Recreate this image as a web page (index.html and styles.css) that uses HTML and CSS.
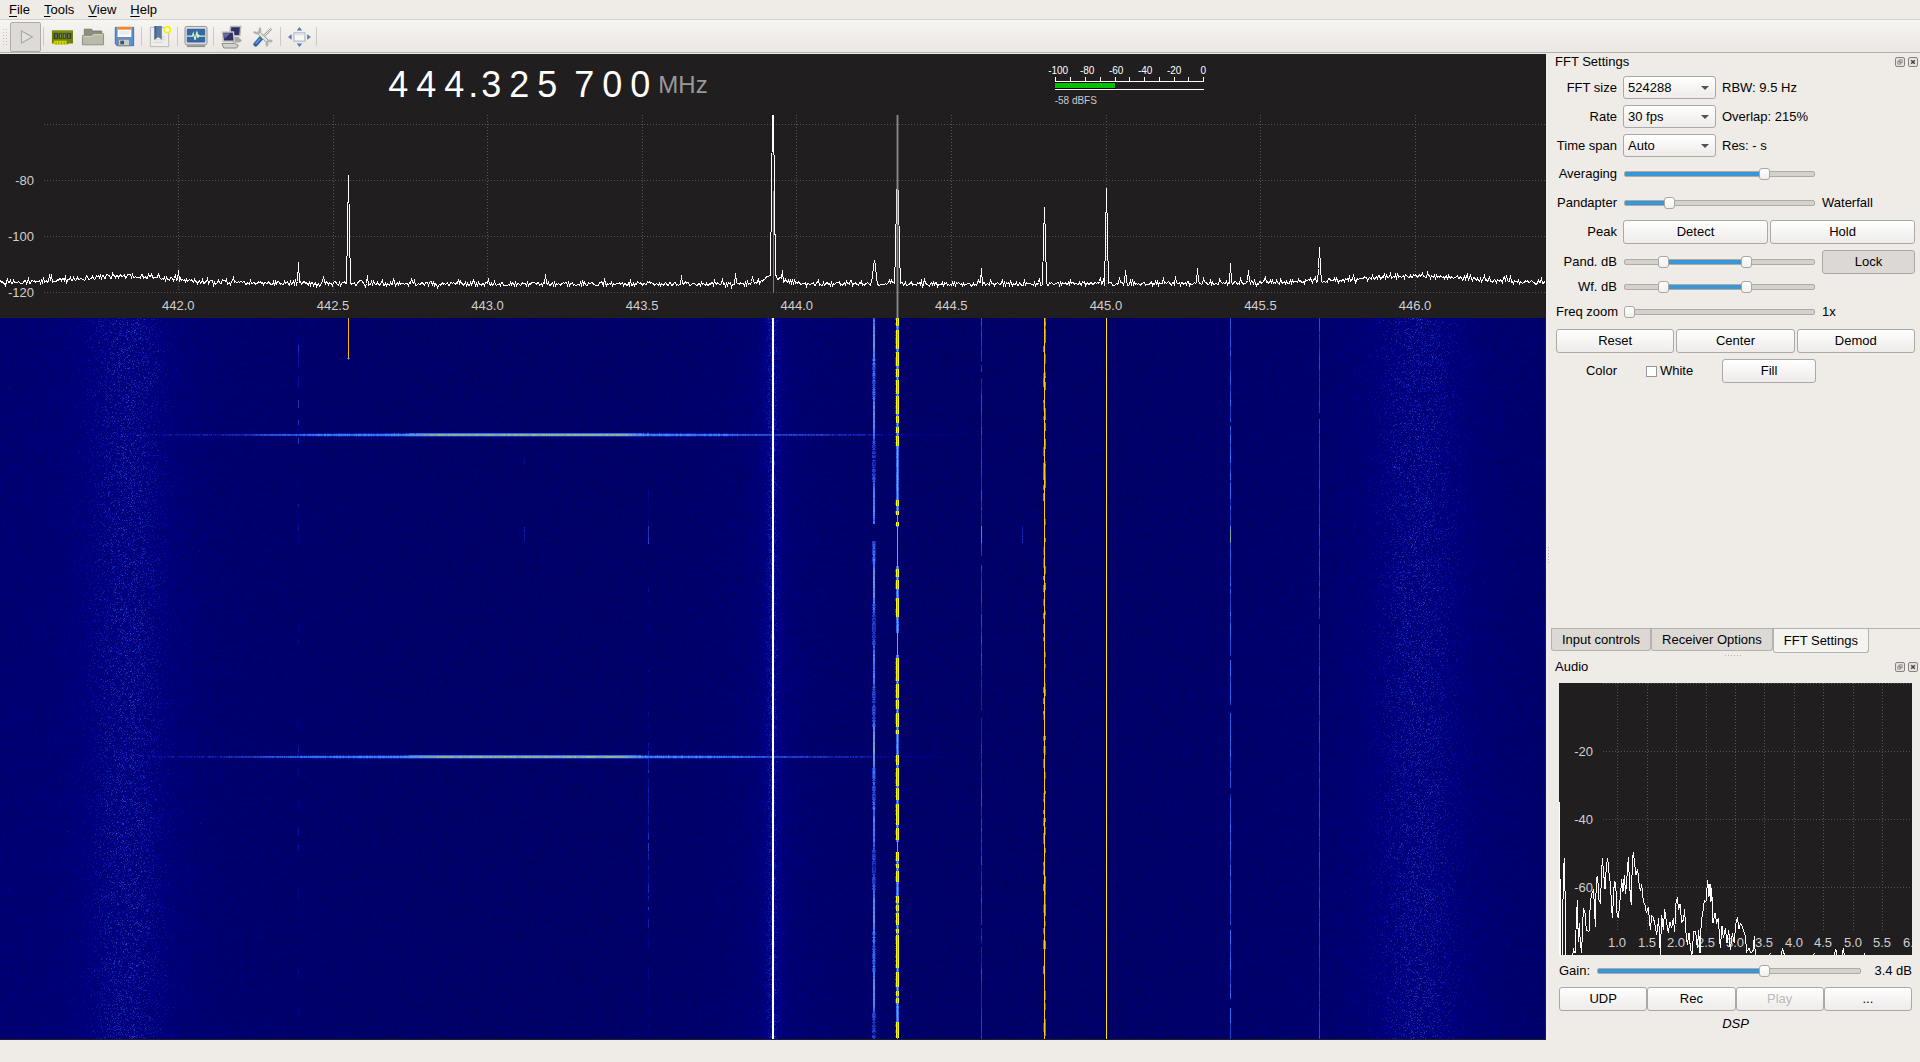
FILE: index.html
```html
<!DOCTYPE html>
<html lang="en">
<head>
<meta charset="utf-8">
<title>Spectrum receiver</title>
<link rel="stylesheet" href="styles.css">
</head>
<body>
<nav class="menubar">
  <button class="menu"><u>F</u>ile</button>
  <button class="menu"><u>T</u>ools</button>
  <button class="menu"><u>V</u>iew</button>
  <button class="menu"><u>H</u>elp</button>
</nav>
<div class="toolbar">
  <i class="grip"></i>
  <button class="tool pressed" aria-label="Start DSP"><svg viewBox="0 0 24 24"><path d="M7 5.500l12 6.500-12 6.500z" fill="#e4e2df" stroke="#aaa8a4" stroke-width="1.200"/></svg></button>
  <i class="sep"></i>
  <button class="tool" aria-label="Configure device"><svg viewBox="0 0 24 24"><path d="M1 5h23v14h-5v1h-15v-1h-3z" fill="#6e7f07"/><path d="M1 5h23v2h-23z" fill="#7c8c14"/><path d="M3 8h5v6h-5zM9 8h3v6h-3zM13 8h3v6h-3zM17 8h5v6h-5z" fill="#343a30"/><path d="M5.500 9v4M10.500 9v4M14.500 9v4M19.500 9v4" stroke="#98a19a"/><path d="M3 16h14v4h-14z" fill="#d3d800"/><path d="M5.500 17v3M8.500 17v3M11.500 17v3M14.500 17v3" stroke="#8d9900"/></svg></button>
  <button class="tool" aria-label="Open"><svg viewBox="0 0 24 24"><path d="M2.500 18V3.500h8l1 2h10V18z" fill="#8d8e7c" stroke="#77786a"/><path d="M.5 20.500v-10h10l2-2h11v12z" fill="#b9baa8" stroke="#8b8c7d"/><path d="M1.500 11.500h9.500l2-2h9.500" fill="none" stroke="#d5d6c8"/></svg></button>
  <button class="tool" aria-label="Save"><svg viewBox="0 0 24 24"><path d="M2.500 1.500h20v20h-18l-2-2z" fill="#5b8fd0" stroke="#3c6ca8"/><path d="M5 1h15v11h-15z" fill="#fafafa"/><path d="M5 1h15v3h-15z" fill="#f5842b"/><path d="M7 6.500h11M7 8.500h11" stroke="#ddd"/><path d="M6 14.500h12v7h-12z" fill="#c9cbc8" stroke="#7f878c"/><path d="M8 16h4v4h-4z" fill="#31537c"/></svg></button>
  <i class="sep"></i>
  <button class="tool" aria-label="Bookmark"><svg viewBox="0 0 24 24"><path d="M1.500 1.500h20v21h-20z" fill="#eeefed" stroke="#b4b6b2"/><path d="M5 12h13M5 15h13M5 18h10" stroke="#d3d5d2"/><path d="M6 0h8v15l-4-3-4 3z" fill="#5a7ba6"/><path d="M6 0h2v13l-2 2z" fill="#43638c"/><circle cx="20" cy="4" r="3.200" fill="#fffde0" stroke="#f7ee1c" stroke-width="2"/></svg></button>
  <i class="sep"></i>
  <button class="tool" aria-label="Monitor"><svg viewBox="0 0 24 24"><rect x="0" y="0.500" width="24" height="20" rx="2" fill="#dcdedb" stroke="#8a8d88"/><path d="M2 21h20v2h-20z" fill="#8f918d"/><rect x="2" y="3" width="20" height="15" rx="1" fill="#3467a4"/><path d="M2 11h6l1-3 2 7 2-9 1 7 1-3 1 1h6" fill="none" stroke="#d3f6bd" stroke-width="1.300"/></svg></button>
  <i class="sep"></i>
  <button class="tool" aria-label="Remote control"><svg viewBox="0 0 24 24"><path d="M10.500 .5h11l-1 10h-11z" fill="#302f67" stroke="#b5b7b2" stroke-width="1.600"/><path d="M11 15l3-3h5l4 4-3 2h-7z" fill="#a7a9a4"/><path d="M1.500 6.500h12l1 10h-12z" fill="#302f67" stroke="#c7c9c4" stroke-width="1.600"/><path d="M3 8h7l-6 6z" fill="#6e6da0"/><path d="M1 19h14l4 2-2 3H3z" fill="#d0d2cd" stroke="#85877f"/></svg></button>
  <button class="tool" aria-label="Preferences"><svg viewBox="0 0 24 24"><path d="M21 3l-11 11" stroke="#9da09b" stroke-width="2.600"/><path d="M21 3l-10 10" stroke="#edefeb"/><path d="M10 13l-6 7" stroke="#2e65a8" stroke-width="5" stroke-linecap="round"/><path d="M9 14l-5 5" stroke="#6f9fd5" stroke-width="1.500"/><path d="M6 6l13 13" stroke="#9b9e99" stroke-width="4"/><path d="M6 6l13 13" stroke="#e7e9e5" stroke-width="2.400"/><path d="M2 6a4 4 0 0 0 6 1a4 4 0 0 0 0-5M22 17a4 4 0 0 0-5 0a4 4 0 0 0 0 5" fill="none" stroke="#aeb1ac" stroke-width="2.400"/></svg></button>
  <i class="sep"></i>
  <button class="tool" aria-label="Full screen"><svg viewBox="0 0 24 24"><rect x="6.500" y="7.500" width="12" height="9" fill="#f5f6f5" stroke="#a2a6ab"/><path d="M7 8h11v2h-11z" fill="#dce1e8"/><path d="M9.500 5l3-4 3 4zM9.500 19l3 4 3-4zM4 9v6l-4-3zM21 9v6l4-3z" fill="#4b7ebf"/></svg></button>
  <i class="sep"></i>
</div>

<main class="workspace">
  <section class="receiver">
    <header class="readout">
      <div class="frequency">
        <span class="digit">4</span><span class="digit">4</span><span class="digit">4</span><span class="mark">.</span><span class="digit">3</span><span class="digit">2</span><span class="digit">5</span><span class="mark"></span><span class="digit">7</span><span class="digit">0</span><span class="digit">0</span><span class="unit">MHz</span>
      </div>
      <div class="smeter">
        <div class="smeter-scale"><span>-100</span><span>-80</span><span>-60</span><span>-40</span><span>-20</span><span>0</span></div>
        <svg class="smeter-bar" viewBox="0 0 150 14"><path d="M.5 0v5M15.500 0v5M30.500 0v5M45.500 0v5M60.500 0v5M74.500 0v5M89.500 0v5M104.500 0v5M119.500 0v5M133.500 0v5M148.500 0v5M0 4.500h149M0 12.500h149" stroke="#fff"/><path d="M0 5h61v7h-61z" fill="#000"/><path d="M0 6h60v5h-60z" fill="#00c000"/></svg>
        <div class="smeter-value">-58 dBFS</div>
      </div>
    </header>
    <svg class="spectrum" role="img" aria-label="Spectrum">
      <g class="grid" id="spectrum-grid"></g>
      <g class="axis axis-db"><text x="34" y="70">-80</text><text x="34" y="126">-100</text><text x="34" y="182">-120</text></g>
      <g class="axis axis-freq"><text x="11.54%" y="195">442.0</text><text x="21.55%" y="195">442.5</text><text x="31.55%" y="195">443.0</text><text x="41.56%" y="195">443.5</text><text x="51.57%" y="195">444.0</text><text x="61.57%" y="195">444.5</text><text x="71.58%" y="195">445.0</text><text x="81.58%" y="195">445.5</text><text x="91.59%" y="195">446.0</text></g>
      <svg viewBox="0 0 1545 203" width="100%" height="203" preserveAspectRatio="none">
        <path d="M773.5 76V178" stroke="#6f7e8a"/>
        <path class="trace" id="spectrum-trace"/>
        <path d="M896 0h3v203h-3z" fill="#a0a0a0" opacity=".35"/>
        <path d="M897.5 0V203" stroke="#f0604c"/>
      </svg>
    </svg>
    <canvas class="waterfall" id="waterfall"></canvas>
  </section>

  <aside class="docks">
    <i class="split-dots"></i>
    <section class="dock dock-fft">
      <h2 class="dock-title">FFT Settings<span class="dock-buttons">
        <button aria-label="Float"><svg viewBox="0 0 11 11"><path d="M4.500 2.500h4v4h-4zM2.500 4.500h4v4h-4z"/></svg></button>
        <button aria-label="Close"><svg viewBox="0 0 11 11"><path class="cross" d="M3 3l5 5M8 3l-5 5"/></svg></button></span></h2>
      <form class="settings">
        <label for="size">FFT size</label><span class="combo"><select id="size"><option>524288</option></select></span><output class="wide">RBW: 9.5 Hz</output>
        <label for="rate">Rate</label><span class="combo"><select id="rate"><option>30 fps</option></select></span><output class="wide">Overlap: 215%</output>
        <label for="span">Time span</label><span class="combo"><select id="span"><option>Auto</option></select></span><output class="wide">Res: - s</output>
        <label for="avg">Averaging</label><span class="slider" style="--to:75%"><input id="avg" type="range" value="75"></span><output></output>
        <label for="split">Pandapter</label><span class="slider" style="--to:22%"><input id="split" type="range" value="22"></span><output>Waterfall</output>
        <span class="caption">Peak</span><span class="pair"><button type="button">Detect</button><button type="button">Hold</button></span>
        <label for="pand-lo">Pand. dB</label><span class="slider double" style="--from:20%;--to:65%"><input id="pand-lo" type="range" value="19"><input aria-label="Pand. dB maximum" type="range" value="65"></span><button type="button" class="down">Lock</button>
        <label for="wf-lo">Wf. dB</label><span class="slider double" style="--from:20%;--to:65%"><input id="wf-lo" type="range" value="19"><input aria-label="Wf. dB maximum" type="range" value="65"></span><output></output>
        <label for="zoom">Freq zoom</label><span class="slider" style="--to:0%"><input id="zoom" type="range" value="0"></span><output>1x</output>
        <span class="triple"><button type="button">Reset</button><button type="button">Center</button><button type="button">Demod</button></span>
        <span class="caption">Color</span><label class="check"><input type="checkbox">White</label><button type="button">Fill</button>
      </form>
    </section>
    <div class="tabs"><button>Input controls</button><button>Receiver Options</button><button class="current">FFT Settings</button></div>
    <i class="dock-grip"></i>
    <section class="dock">
      <h2 class="dock-title">Audio<span class="dock-buttons">
        <button aria-label="Float"><svg viewBox="0 0 11 11"><path d="M4.500 2.500h4v4h-4zM2.500 4.500h4v4h-4z"/></svg></button>
        <button aria-label="Close"><svg viewBox="0 0 11 11"><path class="cross" d="M3 3l5 5M8 3l-5 5"/></svg></button></span></h2>
      <div class="audio">
        <svg class="audio-plot" viewBox="0 0 353 272" role="img" aria-label="Audio spectrum">
          <path class="grid" d="M44 .5H353M44 68.500H353M44 136.500H353M44 204.500H353M58.500 0V247M88.500 0V247M117.500 0V247M147.500 0V247M176.500 0V247M205.500 0V247M235.500 0V247M264.500 0V247M294.500 0V247M323.500 0V247"/>
          <g class="axis axis-db"><text x="34" y="73">-20</text><text x="34" y="141">-40</text><text x="34" y="209">-60</text></g>
          <g class="axis axis-freq"><text x="58" y="264">1.0</text><text x="88" y="264">1.5</text><text x="117" y="264">2.0</text><text x="147" y="264">2.5</text><text x="176" y="264">3.0</text><text x="205" y="264">3.5</text><text x="235" y="264">4.0</text><text x="264" y="264">4.5</text><text x="294" y="264">5.0</text><text x="323" y="264">5.5</text><text x="353" y="264">6.0</text></g>
          <svg viewBox="42 189 1059 816" width="353" height="272"><path class="trace" d="M43 546V1004M47 778V1004M52 1004L55 760 58 715 61 860 62 1004M83 1004L86 990 90 1000 93 930 97 840 100 965 103 910 106 970 110 998 113 905 116 865 120 880 124 930 132 934 136 850 140 820 145 812 148 850 151 920 154 772 158 770 162 840 166 848 172 715 176 760 180 808 184 740 188 715 192 760 196 790 202 895 208 785 212 790 216 880 220 895 226 830 230 778 234 815 238 765 242 822 250 712 254 800 259 855 262 720 265 697 270 740 273 765 278 748 283 800 287 812 290 792 295 845 300 855 304 880 310 860 316 930 320 888 325 892 330 915 335 945 341 895 346 1004 350 885 355 930 359 868 365 910 370 938 375 905 380 925 385 893 389 936 393 850 397 832 401 870 405 852 410 905 415 900 419 868 422 930 427 975 432 940 437 990 441 1004 446 935 452 935 457 985 461 930 465 1000 469 900 473 880 478 842 483 845 488 780 492 830 495 792 498 845 500 805 504 908 510 880 515 908 520 895 526 985 531 917 535 955 541 925 546 968 551 930 556 990 562 940 568 970 572 912 577 892 582 928 586 910 591 918 597 935 601 948 605 995 612 985 618 1000 625 990 628 948 631 1004M674 1004L677 1000M708 1004L713 987 718 1004M806 1004L809 1000M868 1004L872 986 876 1004M892 1004L895 985 898 1004M957 1004L960 998"/></svg>
        </svg>
        <div class="gain"><label for="gain">Gain:</label><span class="slider" style="--to:64%"><input id="gain" type="range" value="64"></span><output for="gain">3.4 dB</output></div>
        <div class="audio-buttons"><button>UDP</button><button>Rec</button><button disabled>Play</button><button>...</button></div>
        <p class="dsp">DSP</p>
      </div>
    </section>
  </aside>
</main>
<footer class="statusbar"></footer>
<script src="plots.js"></script>
</body>
</html>
```
FILE: styles.css
```css
* { box-sizing: border-box; }
body {
  margin: 0;
  min-height: 100vh;
  display: flex;
  flex-direction: column;
  background: #efebe7;
  color: #000;
  font: 13px/16px "Liberation Sans", Arial, sans-serif;
}
button, select, input { font: inherit; color: inherit; margin: 0; }
svg { display: block; }

.menubar { display: flex; gap: 14px; height: 19px; padding: 1px 9px 0; }
.menu { border: 0; padding: 0; background: none; line-height: 16px; }
.menu u { text-underline-offset: 2px; }

.toolbar {
  display: flex;
  align-items: center;
  height: 34px;
  padding: 1px 0 0 2px;
  border-top: 1px solid #d3d0cc;
  border-bottom: 1px solid #b5b1ad;
  background: linear-gradient(#f7f5f2, #ebe7e3);
}
.grip { width: 5px; height: 17px; margin-right: 3px; background: radial-gradient(circle, #c2beba 1px, transparent 1px) 0 0 / 3px 3px; }
.sep { width: 1px; height: 19px; margin: 0 2px; background: #cdc9c5; }
.tool { display: flex; align-items: center; justify-content: center; width: 31px; height: 30px; padding: 0; border: 1px solid transparent; border-radius: 2px; background: none; }
.tool svg { width: 22px; height: 22px; overflow: visible; }
.pressed { border-color: #b0aca8; background: #dedad7; }

.workspace { flex: 1; display: grid; grid-template-columns: minmax(0, 1fr) 374px; }
.receiver { display: flex; flex-direction: column; min-width: 0; margin-top: 1px; padding: 0 1px 1px 0; background: #201e1f; }
.readout { display: flex; justify-content: center; gap: 347px; height: 61px; padding-left: 43px; color: #fff; }
.frequency { display: flex; align-items: center; font-size: 36px; line-height: 60px; }
.digit { width: 28px; text-align: center; }
.mark { width: 9px; text-align: center; }
.unit { padding-left: 4px; color: #999; font-size: 24px; }
.smeter { width: 149px; padding-top: 11px; font-size: 10px; line-height: 12px; }
.smeter-scale { display: flex; margin: 0 -14px 0 -11px; }
.smeter-scale span { flex: 1; text-align: center; }
.smeter-bar { width: 150px; height: 14px; shape-rendering: crispEdges; }
.smeter-value { padding-top: 4px; color: #ccc; }

.spectrum { width: 100%; height: 203px; flex: none; }
.grid { fill: none; stroke: #555; stroke-dasharray: 1 2; shape-rendering: crispEdges; }
.axis { fill: #d0d0d0; }
.axis-db { text-anchor: end; }
.axis-freq { text-anchor: middle; }
.trace { fill: none; stroke: #fff; vector-effect: non-scaling-stroke; shape-rendering: crispEdges; }
.waterfall { display: block; flex: 1; width: 100%; min-height: 200px; height: 0; background: #00006b; image-rendering: pixelated; }

.docks { position: relative; display: flex; flex-direction: column; min-width: 0; }
.dock-fft { flex: 1; }
.split-dots { position: absolute; left: 2px; top: 50%; width: 1px; height: 16px; background: repeating-linear-gradient(#b5b1ad 0 1px, transparent 1px 3px); }
.dock-title { display: flex; justify-content: space-between; align-items: center; height: 18px; margin: 0; padding: 0 2px 0 9px; font-size: 13px; font-weight: 400; }
.dock-buttons { display: flex; gap: 3px; }
.dock-buttons button { width: 10px; height: 10px; padding: 0; border: 1px solid #85827f; border-radius: 2px; background: #e6e2de; }
.dock-buttons svg { width: 8px; height: 8px; fill: none; stroke: #777; }
.dock-buttons .cross { stroke: #444; stroke-width: 2; }

.settings {
  display: grid;
  grid-template-columns: 61px 93px 94px 93px;
  grid-template-rows: 23px 23px 23px 22px 23px 24px 24px 14px 23px 24px 24px;
  gap: 6px;
  align-items: center;
  padding: 5px 5px 12px 10px;
}
.settings > label:not(.check), .caption { text-align: right; white-space: nowrap; }
.wide { grid-column: 3 / 5; }
.settings .slider { grid-column: 2 / 4; }
.pair { grid-column: 2 / 5; display: flex; gap: 2px; }
.triple { grid-column: 1 / 5; display: flex; gap: 2px; }
.settings button, .audio-buttons button {
  flex: 1;
  height: 24px;
  padding: 0;
  border: 1px solid #aca8a5;
  border-radius: 3px;
  background: linear-gradient(#fff, #eeebe9);
}
.settings .down { background: #dcd8d5; }
.audio-buttons button:disabled { color: #bebab7; }

.combo { position: relative; }
.combo::after { content: ""; position: absolute; right: 7px; top: 10px; border: 4px solid transparent; border-top-color: #55514e; border-bottom: 0; pointer-events: none; }
.combo select { display: block; appearance: none; width: 100%; height: 23px; padding: 0 4px; border: 1px solid #aca8a5; border-radius: 3px; background: linear-gradient(#fff, #eeebe9); }

.check { display: flex; align-items: center; justify-content: center; gap: 3px; }
.check input { appearance: none; width: 11px; height: 11px; border: 1px solid #9794a0; background: #fff; }

.slider { display: grid; align-items: center; height: 12px; padding: 0 1px; }
.slider::before {
  content: "";
  grid-area: 1 / 1;
  height: 4px;
  border: 1px solid #aeaaa6;
  border-radius: 2px;
  background:
    linear-gradient(#1f6ca5, #4aa6e4 50%, #1f6ca5) calc(var(--from, 0%) / (1 - (var(--to) - var(--from, 0%)) / 100%)) 0 / 0 0 no-repeat,
    #d5d1cd;
  background: linear-gradient(90deg, transparent var(--from, 0%), #3a97d6 var(--from, 0%) var(--to), transparent var(--to)) border-box, #d5d1cd;
}
.slider input { grid-area: 1 / 1; appearance: none; width: 100%; height: 12px; background: transparent; }
.slider input::-webkit-slider-runnable-track { height: 12px; border: 0; background: transparent; }
.slider input::-webkit-slider-thumb {
  appearance: none;
  width: 11px;
  height: 12px;
  border: 1px solid #aaa6a2;
  border-radius: 3px;
  background: linear-gradient(#fff, #f2f0ee);
}
.double input { position: relative; pointer-events: none; }
.double input::-webkit-slider-thumb { pointer-events: auto; }

.tabs { display: flex; align-items: flex-start; height: 26px; margin-left: 5px; border-top: 1px solid #b5b1ad; }
.tabs button { height: 22px; padding: 0 10px; border: 1px solid #b5b1ad; border-top: 0; border-radius: 0 0 3px 3px; background: #dcd8d4; }
.tabs .current { height: 24px; background: #f5f3f0; }
.dock-grip { align-self: center; width: 17px; height: 4px; background: repeating-linear-gradient(90deg, #b5b1ad 0 1px, transparent 1px 3px) 0 1px / 100% 1px no-repeat; }

.audio { padding: 7px 8px 8px 13px; }
.audio-plot { width: 100%; background: #201e1f; overflow: hidden; }
.gain { display: flex; align-items: center; gap: 6px; height: 32px; }
.gain .slider { flex: 1; }
.gain output { min-width: 44px; text-align: right; }
.audio-buttons { display: flex; }
.dsp { margin: 5px 0 0; text-align: center; font-style: italic; }
.statusbar { height: 22px; }
```
FILE: plots.js
```js
(function () {
  var SPAN = 1545;
  var seed = 20177;
  function rnd() {
    seed = (seed * 1664525 + 1013904223) >>> 0;
    return seed / 4294967296;
  }
  function bell(x, centre, width) {
    var d = (x - centre) / width;
    return Math.exp(-d * d / 2);
  }

  /* Spectrum grid */
  var grid = document.getElementById('spectrum-grid');
  function line(x1, y1, x2, y2) {
    var el = document.createElementNS('http://www.w3.org/2000/svg', 'line');
    el.setAttribute('x1', x1); el.setAttribute('y1', y1);
    el.setAttribute('x2', x2); el.setAttribute('y2', y2);
    grid.appendChild(el);
  }
  [9.5, 65.5, 121.5, 177.5].forEach(function (y) { line(44, y, '100%', y); });
  for (var g = 0; g < 9; g++) {
    var gx = (178.5 + g * 154.6) / SPAN * 100 + '%';
    line(gx, 0, gx, 177);
  }

  /* Spectrum trace: position, top, then the levels one and two steps from the centre */
  var peaks = [[51, 159], [178, 155], [298, 147], [348, 60, 115], [367, 160], [545, 159],
    [681, 160], [735, 158], [772, 0, 0, 76], [782, 155], [874, 145, 150, 162], [897, 64, 84, 135], [981, 153],
    [1044, 92, 124], [1106, 73, 121], [1125, 155], [1197, 153], [1230, 148], [1248, 155], [1319, 132, 153]];
  var level = [];
  for (var x = 0; x < SPAN; x++) {
    var floor = 168.5 - 6 * bell(x, 125, 40) - 5 * bell(x, 1415, 45) - 3 * bell(x, 1400, 120) - 2 * bell(x, 80, 150);
    floor -= 12 * Math.exp(-Math.abs(x - 772) / 9);
    var n = (rnd() - 0.5) * 4;
    if (rnd() < 0.13) n -= rnd() * 5;
    if (rnd() < 0.08) n += rnd() * 2;
    level[x] = floor + n;
  }
  peaks.forEach(function (p) {
    for (var d = -2; d <= 2; d++) {
      var y = p[1 + Math.abs(d)];
      if (p[0] === 772 && d === -1) y = 76;
      if (p[0] === 772 && d === -2) continue;
      if (y !== undefined) level[p[0] + d] = Math.min(level[p[0] + d], y);
    }
  });
  document.getElementById('spectrum-trace').setAttribute('d', 'M' + level.map(function (y, i) {
    return (i + 0.5) + ' ' + (Math.round(y) + 0.5);
  }).join('L'));

  /* Waterfall */
  var canvas = document.getElementById('waterfall');
  var W = canvas.width = SPAN;
  var H = canvas.height = 721;
  var v = new Float32Array(W * H);
  var i, y;
  for (x = 0; x < W; x++) {
    var left = bell(x, 127, 33), right = bell(x, 1417, 36);
    var base = 57 + 4 * bell(x, 60, 170) + 3 * bell(x, 1415, 130) + 3 * bell(x, 772, 60) + 3 * left + 3 * right;
    var halo = Math.exp(-Math.abs(x - 772) / 8);
    for (y = 0; y < H; y++) {
      var s = base + (rnd() + rnd() - 1) * 7;
      var r = rnd();
      s += Math.max(left, right) * r * r * r * r * 20;
      s += halo * (5 + rnd() * 19);
      if (rnd() < 0.0012) s += 8;
      v[y * W + x] = s;
    }
  }
  function put(px, py, s) {
    if (px >= 0 && px < W && py >= 0 && py < H) v[py * W + px] = Math.max(v[py * W + px], s);
  }
  function column(px, from, to, low, high, density) {
    var run = 0, on = true, s = low;
    for (var py = from; py < to; py++) {
      if (run-- <= 0) { run = 1 + rnd() * 7; on = rnd() < density; s = low + rnd() * (high - low); }
      if (on) put(px, py, s + (rnd() - 0.5) * 5);
    }
  }
  /* Wide horizontal bursts */
  var shape = [[100, 66], [160, 72], [220, 76], [262, 86], [330, 97], [400, 101], [435, 119], [620, 121], [645, 102], [720, 97], [770, 87], [850, 78], [900, 68], [970, 62]];
  [116, 438].forEach(function (row) {
    for (var k = 0; k < shape.length - 1; k++) {
      var a = shape[k], b = shape[k + 1];
      for (x = a[0]; x < b[0]; x++) {
        var peak = a[1] + (b[1] - a[1]) * (x - a[0]) / (b[0] - a[0]) + (rnd() - 0.5) * 10;
        put(x, row, peak);
        put(x, row + 1, peak - 2);
        put(x, row - 1, peak > 105 ? 95 : peak - 22);
        put(x, row + 2, peak > 105 ? 80 : peak - 24);
        if (peak > 100 && rnd() < 0.3) { put(x, row - 9, 67); put(x, row + 4, 70); }
      }
    }
  });
  column(298, 0, 130, 66, 84, 0.5); column(298, 130, H, 62, 76, 0.3);
  column(648, 130, H, 62, 72, 0.5); column(648, 208, 226, 80, 92, 1); column(648, 425, 610, 70, 84, 0.85);
  column(524, 209, 226, 72, 88, 0.9); column(524, 140, 160, 62, 72, 0.5);
  column(1022, 208, 225, 76, 88, 1);
  column(981, 0, H, 78, 90, 0.93); column(981, 208, 225, 98, 104, 1);
  column(1230, 0, H, 82, 97, 0.93); column(1230, 208, 225, 105, 118, 1);
  column(1319, 0, H, 80, 88, 0.93);
  column(1354, 0, H, 60, 70, 0.15);
  for (y = 0; y < H; y++) {
    if (y < 206 || y > 222) {
      var tone = 96 + 10 * Math.sin(y / 13) + 6 * Math.sin(y / 31) + (rnd() - 0.5) * 14;
      put(873, y, tone); put(874, y, tone - 2);
      if (Math.sin(y / 13) < 0 && rnd() < 0.7) { put(872, y, 84); put(875, y, 80); }
    }
    put(1106, y, 160);
    put(1044, y, 170);
  }
  column(1043, 0, 60, 85, 120, 0.6); column(1045, 0, 60, 85, 120, 0.5);
  column(1043, 60, H, 85, 110, 0.4); column(1045, 60, H, 85, 110, 0.35);
  for (y = 0; y < 40; y++) put(348, y, 176);
  put(347, 40, 95); put(348, 40, 118); put(349, 40, 95); put(348, 41, 90);
  /* Active voice channel: [start, end, density] */
  [[0, 136, 0.85], [136, 182, 0.15], [182, 197, 0.95], [204, 209, 1], [248, 315, 0.85], [337, 417, 0.8], [417, 437, 0.2], [437, 524, 0.8], [534, 720, 0.85]].forEach(function (seg) {
    var run = 0, on = true;
    for (y = seg[0]; y < seg[1]; y++) {
      if (run-- <= 0) { on = !on || rnd() < 0.35; run = on ? 2 + rnd() * 7 : rnd() * 3; if (rnd() > seg[2]) on = false; }
      for (var d = -1; d <= 1; d++) put(897 + d, y, on ? 146 + rnd() * 8 : 88 + rnd() * 12);
      if (on && rnd() < 0.6) put(895, y, 84);
    }
  });

  var ctx = canvas.getContext('2d');
  var img = ctx.createImageData(W, H);
  for (i = 0; i < v.length; i++) {
    var l = v[i], c;
    if (l < 70) c = [0, 0, 140 * (l - 20) / 50];
    else if (l < 100) c = [60 * (l - 70) / 30, 125 * (l - 70) / 30, 115 * (l - 70) / 30 + 140];
    else if (l < 150) c = [195 * (l - 100) / 50 + 60, 130 * (l - 100) / 50 + 125, 255 - 255 * (l - 100) / 50];
    else c = [255, 255 - 255 * (l - 150) / 100, 0];
    img.data[i * 4] = c[0];
    img.data[i * 4 + 1] = c[1];
    img.data[i * 4 + 2] = c[2];
    img.data[i * 4 + 3] = 255;
  }
  ctx.putImageData(img, 0, 0);
  ctx.fillStyle = '#fff';
  ctx.fillRect(772, 0, 2, H);
  ctx.fillStyle = '#f08040';
  ctx.fillRect(897, 0, 1, H);
})();
```
